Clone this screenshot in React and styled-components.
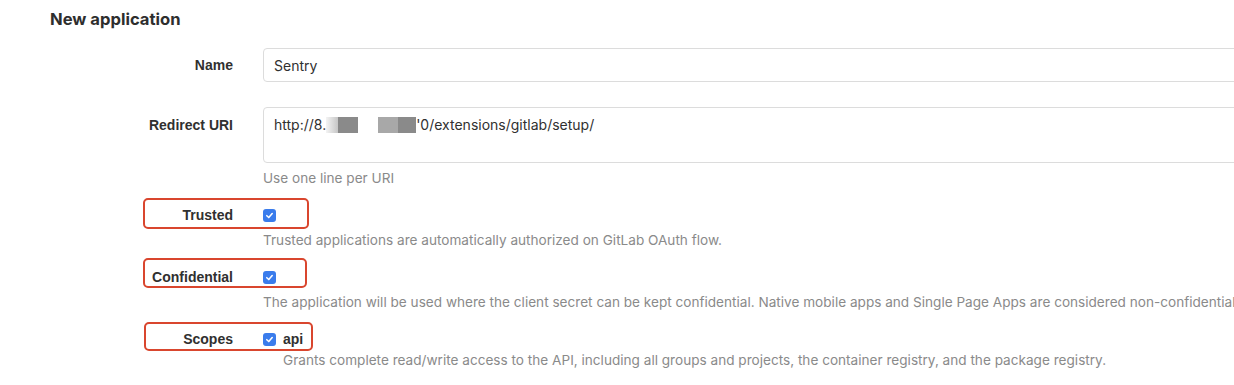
import React from "react";
import styled, { createGlobalStyle } from "styled-components";

const GlobalStyle = createGlobalStyle`
  html, body {
    margin: 0;
    padding: 0;
    background: #ffffff;
    overflow: hidden;
  }
  body {
    font-family: Inter, "Liberation Sans", Arial, sans-serif;
    color: #303030;
  }
`;

const Page = styled.div`
  width: 1234px;
  height: 385px;
  overflow: hidden;
`;

const Title = styled.h3`
  margin: 0;
  padding: 9px 0 0 50px;
  font-size: 16.6px;
  line-height: 20px;
  font-weight: 700;
  color: #2e2e2e;
`;

const Row = styled.div`
  position: relative;
  display: grid;
  grid-template-columns: 233px 1000px;
  column-gap: 30px;
  align-items: ${(p) => (p.$top ? "start" : "center")};
  margin-top: ${(p) => p.$mt}px;
`;

const Label = styled.label`
  text-align: right;
  font-family: "Liberation Sans", Arial, sans-serif;
  font-size: 14px;
  line-height: 20px;
  font-weight: 700;
  color: #303030;
  margin-top: ${(p) => p.$mt || 0}px;
`;

const TextInput = styled.div`
  box-sizing: border-box;
  height: 34px;
  border: 1px solid #dcdcdc;
  border-radius: 4px;
  padding: 0 10px;
  display: flex;
  align-items: center;
  font-size: 14px;
  color: #303030;
`;

const TextArea = styled.div`
  box-sizing: border-box;
  height: 56px;
  border: 1px solid #dcdcdc;
  border-radius: 4px;
  padding: 7px 10px;
  font-size: 14px;
  line-height: 20px;
  color: #303030;
  display: flex;
  align-items: flex-start;
  white-space: pre;
`;

const Redacted = styled.span`
  display: inline-block;
  width: ${(p) => p.$w}px;
  height: 16px;
  margin-top: 2px;
  background: ${(p) => p.$bg};
`;

const Help = styled.div`
  margin: ${(p) => p.$mt}px 0 0 ${(p) => p.$ml}px;
  font-size: 13.6px;
  line-height: 16px;
  color: #8a8a8a;
  white-space: nowrap;
`;

const Field = styled.div`
  display: flex;
  align-items: center;
  gap: 7px;
  height: 20px;
`;

const Box = styled.span`
  box-sizing: border-box;
  width: 13px;
  height: 13px;
  border-radius: 3px;
  background: #3a7cec;
  display: inline-flex;
  align-items: center;
  justify-content: center;
`;

const ScopeName = styled.span`
  font-family: "Liberation Sans", Arial, sans-serif;
  font-size: 14px;
  font-weight: 700;
  color: #303030;
`;

const Highlight = styled.div`
  position: absolute;
  box-sizing: border-box;
  left: ${(p) => p.$left}px;
  top: ${(p) => p.$top}px;
  width: ${(p) => p.$width}px;
  height: ${(p) => p.$height}px;
  border: 2.5px solid #d9462e;
  border-radius: 5px;
  pointer-events: none;
`;

function Checkbox() {
  return (
    <Box>
      <svg width="9" height="9" viewBox="0 0 10 10">
        <path
          d="M2 5.2 L4.2 7.3 L8 2.8"
          fill="none"
          stroke="#ffffff"
          strokeWidth="1.7"
          strokeLinecap="round"
          strokeLinejoin="round"
        />
      </svg>
    </Box>
  );
}

function CheckRow({ label, mt, box, children }) {
  return (
    <Row $mt={mt}>
      <Label>{label}</Label>
      <Field>
        <Checkbox />
        {children}
      </Field>
      <Highlight {...box} />
    </Row>
  );
}

export default function App() {
  return (
    <Page>
      <GlobalStyle />
      <Title>New application</Title>

      <Row $mt={19}>
        <Label>Name</Label>
        <TextInput>Sentry</TextInput>
      </Row>

      <Row $mt={25} $top>
        <Label $mt={8}>Redirect URI</Label>
        <TextArea>
          <span>http://8.</span>
          <Redacted $w={12} $bg="linear-gradient(90deg, #f4f4f4, #c6c6c6)" />
          <Redacted $w={20} $bg="#8a8a8a" />
          <Redacted $w={20} $bg="#ffffff" />
          <Redacted $w={20} $bg="#a8a8a8" />
          <Redacted $w={18} $bg="#8a8a8a" />
          <span>'0/extensions/gitlab/setup/</span>
        </TextArea>
      </Row>
      <Help $mt={7} $ml={263}>Use one line per URI</Help>

      <CheckRow
        label="Trusted"
        mt={19}
        box={{ $left: 143, $top: -7, $width: 166, $height: 31 }}
      />
      <Help $mt={7} $ml={263}>
        Trusted applications are automatically authorized on GitLab OAuth flow.
      </Help>

      <CheckRow
        label="Confidential"
        mt={19}
        box={{ $left: 143, $top: -9, $width: 164, $height: 30 }}
      />
      <Help $mt={7} $ml={263}>
        The application will be used where the client secret can be kept
        confidential. Native mobile apps and Single Page Apps are considered
        non-confidential.
      </Help>

      <CheckRow
        label="Scopes"
        mt={19}
        box={{ $left: 144, $top: -7, $width: 169, $height: 29 }}
      >
        <ScopeName>api</ScopeName>
      </CheckRow>
      <Help $mt={3} $ml={283}>
        Grants complete read/write access to the API, including all groups and
        projects, the container registry, and the package registry.
      </Help>
    </Page>
  );
}
